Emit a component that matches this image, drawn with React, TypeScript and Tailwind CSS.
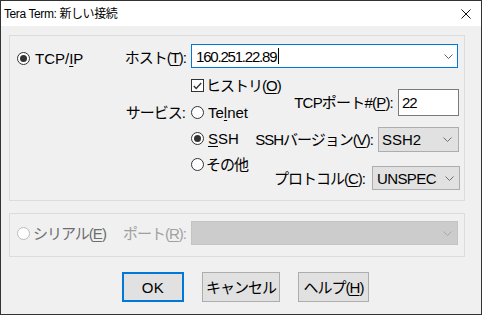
import React from 'react';

const font = "font-['Liberation_Sans','Noto_Sans_CJK_JP',sans-serif]";

function Radio({ checked = false, disabled = false }: { checked?: boolean; disabled?: boolean }) {
  return (
    <div
      className={`w-[13px] h-[13px] shrink-0 rounded-full border bg-white flex items-center justify-center ${
        disabled ? 'border-[#bcbcbc]' : 'border-[#333333]'
      }`}
    >
      {checked && <div className="w-[7px] h-[7px] rounded-full bg-[#333333]" />}
    </div>
  );
}

function Chevron({ color = '#606060' }: { color?: string }) {
  return (
    <svg width="9" height="5" viewBox="0 0 9 5" className="shrink-0">
      <polyline points="0.5,0.5 4.5,4.5 8.5,0.5" fill="none" stroke={color} strokeWidth="1" />
    </svg>
  );
}

function U({ children }: { children: React.ReactNode }) {
  return <span className="underline underline-offset-[2px] decoration-[1px]">{children}</span>;
}

export default function App() {
  return (
    <div className={`w-[482px] h-[315px] border border-[#333333] bg-[#f0f0f0] flex flex-col text-black ${font}`}>
      {/* Title bar */}
      <div className="h-[25px] bg-white flex items-center justify-between pl-[3px] pr-[10px] shrink-0">
        <span className="text-[12px] tracking-[-0.4px]">Tera Term: 新しい接続</span>
        <svg width="10" height="10" viewBox="0 0 10 10">
          <line x1="0.5" y1="0.5" x2="9.5" y2="9.5" stroke="#111" strokeWidth="1" />
          <line x1="9.5" y1="0.5" x2="0.5" y2="9.5" stroke="#111" strokeWidth="1" />
        </svg>
      </div>

      <div className="flex-1 pl-[8px] pt-[9px] text-[15px] leading-none">
        {/* TCP/IP group */}
        <div className="w-[456px] h-[166px] border border-[#dcdcdc]">
          <div className="flex items-center mt-[8px] h-[24px]">
            <div className="w-[110px] pl-[7px] flex items-center gap-[5px] mt-[4px]">
              <Radio checked />
              <span>
                TCP/<U>I</U>P
              </span>
            </div>
            <div className="w-[71px] pr-[5px] text-right tracking-[-1px] whitespace-nowrap mt-[2px]">
              ホスト(<U>T</U>):
            </div>
            <div className="w-[267px] h-[24px] bg-white border border-[#0078d7] flex items-center justify-between pl-[4px] pr-[4px]">
              <span className="flex items-center tracking-[-1.2px]">
                160.251.22.89
                <span className="inline-block w-[1px] h-[16px] bg-black ml-[2px]" />
              </span>
              <Chevron />
            </div>
          </div>

          <div className="flex mt-[11px]">
            <div className="w-[240px] shrink-0">
              <div className="flex items-center h-[13px] pl-[181px] whitespace-nowrap">
                <div className="w-[13px] h-[13px] shrink-0 border border-[#333333] bg-white flex items-center justify-center">
                  <svg width="9" height="8" viewBox="0 0 9 8">
                    <polyline points="0.8,4 3.2,6.5 8.2,1" fill="none" stroke="#333" strokeWidth="1.4" />
                  </svg>
                </div>
                <span className="ml-[2px] tracking-[-1px]">
                  ヒストリ(<U>O</U>)
                </span>
              </div>

              <div className="flex items-center h-[16px] mt-[12px] whitespace-nowrap">
                <div className="w-[181px] pr-[6px] text-right tracking-[-1px]">サービス:</div>
                <Radio />
                <span className="ml-[4px]">
                  Te<U>l</U>net
                </span>
              </div>
              <div className="flex items-center h-[16px] mt-[10px] pl-[181px] whitespace-nowrap">
                <Radio checked />
                <span className="ml-[4px]">
                  <U>S</U>SH
                </span>
              </div>
              <div className="flex items-center h-[16px] mt-[10px] pl-[181px] whitespace-nowrap">
                <Radio />
                <span className="ml-[2px] tracking-[-1px]">その他</span>
              </div>
            </div>

            <div className="flex-1 flex flex-col items-end pr-[5px] mt-[10px] whitespace-nowrap">
              <div className="flex items-center gap-[5px]">
                <span className="tracking-[-0.8px]">
                  TCPポート#(<U>P</U>):
                </span>
                <div className="w-[61px] h-[27px] bg-white border border-[#7a7a7a] flex items-center pl-[3px] tracking-[-1px]">
                  22
                </div>
              </div>
              <div className="flex items-center gap-[5px] mt-[11px]">
                <span className="tracking-[-1px]">
                  SSHバージョン(<U>V</U>):
                </span>
                <div className="w-[81px] h-[25px] bg-[#e1e1e1] border border-[#adadad] flex items-center justify-between pl-[3px] pr-[6px]">
                  <span>SSH2</span>
                  <Chevron color="#707070" />
                </div>
              </div>
              <div className="flex items-center gap-[7px] mt-[14px] mr-[-1px]">
                <span className="tracking-[-1px]">
                  プロトコル(<U>C</U>):
                </span>
                <div className="w-[88px] h-[24px] bg-[#e1e1e1] border border-[#adadad] flex items-center justify-between pl-[4px] pr-[5px]">
                  <span className="tracking-[-0.6px]">UNSPEC</span>
                  <Chevron color="#707070" />
                </div>
              </div>
            </div>
          </div>
        </div>

        {/* Serial group */}
        <div className="w-[456px] h-[44px] border border-[#dcdcdc] mt-[12px]">
          <div className="flex items-center h-[24px] mt-[7px]">
            <div className="w-[110px] pl-[7px] flex items-center gap-[3px] text-[#6d6d6d] whitespace-nowrap">
              <Radio disabled />
              <span className="tracking-[-1px]">
                シリアル(<U>E</U>)
              </span>
            </div>
            <div className="w-[71px] pr-[5px] text-right tracking-[-1px] whitespace-nowrap text-[#a0a0a0]">
              ポート(<U>R</U>):
            </div>
            <div className="w-[267px] h-[24px] bg-[#cccccc] border border-[#c4c4c4] flex items-center justify-end pr-[5px]">
              <Chevron color="#a8a8a8" />
            </div>
          </div>
        </div>

        {/* Buttons */}
        <div className="flex items-center gap-[18px] mt-[15px] ml-[113px]">
          <button className="w-[62px] h-[30px] bg-[#e1e1e1] border-2 border-[#0078d7] flex items-center justify-center tracking-[0.5px]">
            OK
          </button>
          <button className="w-[78px] h-[30px] bg-[#e1e1e1] border border-[#adadad] flex items-center justify-center tracking-[-1px]">
            キャンセル
          </button>
          <button className="w-[71px] h-[30px] bg-[#e1e1e1] border border-[#adadad] flex items-center justify-center tracking-[-1px]">
            ヘルプ(<U>H</U>)
          </button>
        </div>
      </div>
    </div>
  );
}
